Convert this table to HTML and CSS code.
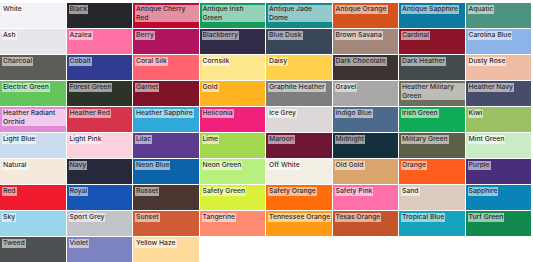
FILE: index.html
```html
<!DOCTYPE html>
<html>
<head>
<meta charset="utf-8">
<link rel="stylesheet" href="styles.css">
</head>
<body>
<div class="grid">
  <div class="sw" style="background:#f2f1f6"><span class="lb">White</span></div>
  <div class="sw" style="background:#26272c"><span class="lb">Black</span></div>
  <div class="sw" style="background:#c1092f"><span class="lb">Antique Cherry Red</span></div>
  <div class="sw" style="background:#139c5c"><span class="lb">Antique Irish Green</span></div>
  <div class="sw" style="background:#12898a"><span class="lb">Antique Jade Dome</span></div>
  <div class="sw" style="background:#d6531f"><span class="lb">Antique Orange</span></div>
  <div class="sw" style="background:#0c7aa2"><span class="lb">Antique Sapphire</span></div>
  <div class="sw" style="background:#4c9480"><span class="lb">Aquatic</span></div>

  <div class="sw" style="background:#e7e6eb"><span class="lb">Ash</span></div>
  <div class="sw" style="background:#ff70a7"><span class="lb">Azalea</span></div>
  <div class="sw" style="background:#b0145f"><span class="lb">Berry</span></div>
  <div class="sw" style="background:#332c48"><span class="lb">Blackberry</span></div>
  <div class="sw" style="background:#3a4659"><span class="lb">Blue Dusk</span></div>
  <div class="sw" style="background:#a3887b"><span class="lb">Brown Savana</span></div>
  <div class="sw" style="background:#8c1428"><span class="lb">Cardinal</span></div>
  <div class="sw" style="background:#8db4e8"><span class="lb">Carolina Blue</span></div>

  <div class="sw" style="background:#5d5c59"><span class="lb">Charcoal</span></div>
  <div class="sw" style="background:#2f3c8f"><span class="lb">Cobalt</span></div>
  <div class="sw" style="background:#ff6571"><span class="lb">Coral Silk</span></div>
  <div class="sw" style="background:#fde78c"><span class="lb">Cornsilk</span></div>
  <div class="sw" style="background:#ffd04b"><span class="lb">Daisy</span></div>
  <div class="sw" style="background:#3c3231"><span class="lb">Dark Chocolate</span></div>
  <div class="sw" style="background:#424b4d"><span class="lb">Dark Heather</span></div>
  <div class="sw" style="background:#efbca6"><span class="lb">Dusty Rose</span></div>

  <div class="sw" style="background:#63c55b"><span class="lb">Electric Green</span></div>
  <div class="sw" style="background:#2c3429"><span class="lb">Forest Green</span></div>
  <div class="sw" style="background:#7e1229"><span class="lb">Garnet</span></div>
  <div class="sw" style="background:#ffb320"><span class="lb">Gold</span></div>
  <div class="sw" style="background:#7e7e7e"><span class="lb">Graphite Heather</span></div>
  <div class="sw" style="background:#a9a7a7"><span class="lb">Gravel</span></div>
  <div class="sw" style="background:#6c6f5b"><span class="lb">Heather Military Green</span></div>
  <div class="sw" style="background:#464d6b"><span class="lb">Heather Navy</span></div>

  <div class="sw" style="background:#e18bd5"><span class="lb">Heather Radiant Orchid</span></div>
  <div class="sw" style="background:#d5344b"><span class="lb">Heather Red</span></div>
  <div class="sw" style="background:#31a9d8"><span class="lb">Heather Sapphire</span></div>
  <div class="sw" style="background:#f0217a"><span class="lb">Heliconia</span></div>
  <div class="sw" style="background:#ddd8d7"><span class="lb">Ice Grey</span></div>
  <div class="sw" style="background:#4b6a8c"><span class="lb">Indigo Blue</span></div>
  <div class="sw" style="background:#0fab57"><span class="lb">Irish Green</span></div>
  <div class="sw" style="background:#99c062"><span class="lb">Kiwi</span></div>

  <div class="sw" style="background:#cadcee"><span class="lb">Light Blue</span></div>
  <div class="sw" style="background:#fad1dc"><span class="lb">Light Pink</span></div>
  <div class="sw" style="background:#5c3c8e"><span class="lb">Lilac</span></div>
  <div class="sw" style="background:#a3d94e"><span class="lb">Lime</span></div>
  <div class="sw" style="background:#6f1535"><span class="lb">Maroon</span></div>
  <div class="sw" style="background:#13313d"><span class="lb">Midnight</span></div>
  <div class="sw" style="background:#5c5f47"><span class="lb">Military Green</span></div>
  <div class="sw" style="background:#c9ecc5"><span class="lb">Mint Green</span></div>

  <div class="sw" style="background:#f5e8dc"><span class="lb">Natural</span></div>
  <div class="sw" style="background:#25293b"><span class="lb">Navy</span></div>
  <div class="sw" style="background:#0b64aa"><span class="lb">Neon Blue</span></div>
  <div class="sw" style="background:#b7f07c"><span class="lb">Neon Green</span></div>
  <div class="sw" style="background:#f3efe4"><span class="lb">Off White</span></div>
  <div class="sw" style="background:#d9a56d"><span class="lb">Old Gold</span></div>
  <div class="sw" style="background:#ff5d1d"><span class="lb">Orange</span></div>
  <div class="sw" style="background:#482f7b"><span class="lb">Purple</span></div>

  <div class="sw" style="background:#f0192d"><span class="lb">Red</span></div>
  <div class="sw" style="background:#1655b3"><span class="lb">Royal</span></div>
  <div class="sw" style="background:#4c3631"><span class="lb">Russet</span></div>
  <div class="sw" style="background:#d9f13b"><span class="lb">Safety Green</span></div>
  <div class="sw" style="background:#ff6c0b"><span class="lb">Safety Orange</span></div>
  <div class="sw" style="background:#ff70a8"><span class="lb">Safety Pink</span></div>
  <div class="sw" style="background:#dccabe"><span class="lb">Sand</span></div>
  <div class="sw" style="background:#0983b8"><span class="lb">Sapphire</span></div>

  <div class="sw" style="background:#98d6ee"><span class="lb">Sky</span></div>
  <div class="sw" style="background:#c3c4c9"><span class="lb">Sport Grey</span></div>
  <div class="sw" style="background:#cf5c36"><span class="lb">Sunset</span></div>
  <div class="sw" style="background:#fc8b71"><span class="lb">Tangerine</span></div>
  <div class="sw" style="background:#ff9b13"><span class="lb">Tennessee Orange</span></div>
  <div class="sw" style="background:#c4552b"><span class="lb">Texas Orange</span></div>
  <div class="sw" style="background:#14a2bd"><span class="lb">Tropical Blue</span></div>
  <div class="sw" style="background:#138a4d"><span class="lb">Turf Green</span></div>

  <div class="sw" style="background:#4e5153"><span class="lb">Tweed</span></div>
  <div class="sw" style="background:#7c83c0"><span class="lb">Violet</span></div>
  <div class="sw" style="background:#ffdb9b"><span class="lb">Yellow Haze</span></div>
</div>
</body>
</html>
```

FILE: styles.css
```css
html, body {
  margin: 0;
  padding: 0;
  background: #ffffff;
}
body {
  font-family: Inter, "Open Sans", sans-serif;
  overflow: hidden;
}
.grid {
  display: grid;
  grid-template-columns: repeat(8, 1fr);
  grid-auto-rows: 25px;
  gap: 1px;
  width: 531px;
  margin: 3px 0 0 0;
}
.sw {
  position: relative;
  overflow: hidden;
  box-sizing: border-box;
  padding: 2px 0 0 2px;
}
.lb {
  display: inline-block;
  max-width: 64px;
  padding: 0 1px;
  font-size: 6.8px;
  font-weight: 500;
  line-height: 8.5px;
  color: #2e2e33;
  background: rgba(255, 255, 255, 0.55);
  vertical-align: top;
}
```
